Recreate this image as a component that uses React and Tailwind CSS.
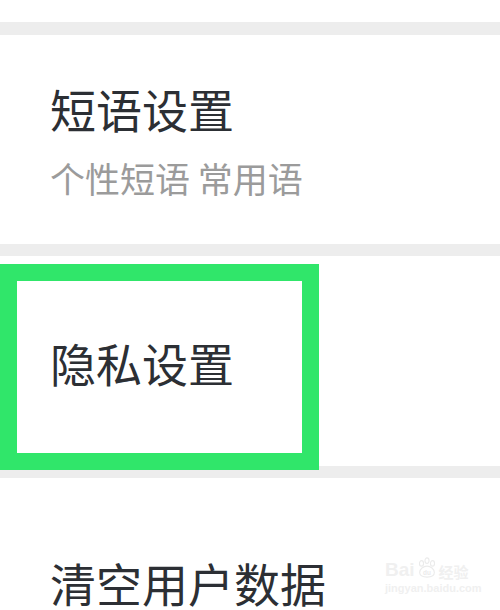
export default function App() {
  const font = { fontFamily: '"Noto Sans CJK SC", "Noto Sans", sans-serif' };
  return (
    <div className="relative w-[500px] h-[610px] overflow-hidden bg-white" style={font}>
      <div className="h-[22px] bg-white" />
      <div className="h-[13px] bg-[#ededed]" />

      <div className="h-[209px] bg-white pl-[50px] pt-[50px]">
        <p className="text-[46px] leading-none text-[#2c2f34]">短语设置</p>
        <p className="mt-[29px] text-[35px] leading-none text-[#9b9b9b]">个性短语 常用语</p>
      </div>

      <div className="h-[12px] bg-[#ededed]" />

      <div className="relative h-[210px] bg-white pl-[50px] pt-[83px]">
        <p className="text-[46px] leading-none text-[#2c2f34]">隐私设置</p>
        <div className="absolute left-0 top-[8px] w-[319px] h-[206px] border-[17px] border-[#30e66a]" />
      </div>

      <div className="h-[12px] bg-[#ededed]" />

      <div className="bg-white pl-[50px] pt-[81px]">
        <p className="text-[46px] leading-none text-[#2c2f34]">清空用户数据</p>
      </div>

      <div className="absolute left-[385px] top-[557px] flex flex-col items-start text-[#f0f0f0]">
        <div className="flex items-end gap-[1px]">
          <span className="text-[19px] leading-none font-bold" style={{ fontFamily: '"Liberation Sans", sans-serif' }}>Bai</span>
          <svg width="22" height="22" viewBox="0 0 24 24" fill="none" stroke="#ebebeb" strokeWidth="1.2">
            <ellipse cx="6" cy="7" rx="2.2" ry="3" />
            <ellipse cx="12" cy="4" rx="2.2" ry="3" />
            <ellipse cx="18" cy="7" rx="2.2" ry="3" />
            <path d="M4 17c0-4 4-7 8-7s8 3 8 7c0 3-3 5-8 5s-8-2-8-5z" />
            <text x="12" y="19.5" fontSize="7" textAnchor="middle" fill="#ebebeb" stroke="none" fontFamily="Liberation Sans, sans-serif" fontWeight="bold">du</text>
          </svg>
          <span className="text-[15px] leading-none font-bold">经验</span>
        </div>
        <span className="mt-[4px] text-[11px] leading-none font-bold" style={{ fontFamily: '"Liberation Sans", sans-serif' }}>jingyan.baidu.com</span>
      </div>
    </div>
  );
}
